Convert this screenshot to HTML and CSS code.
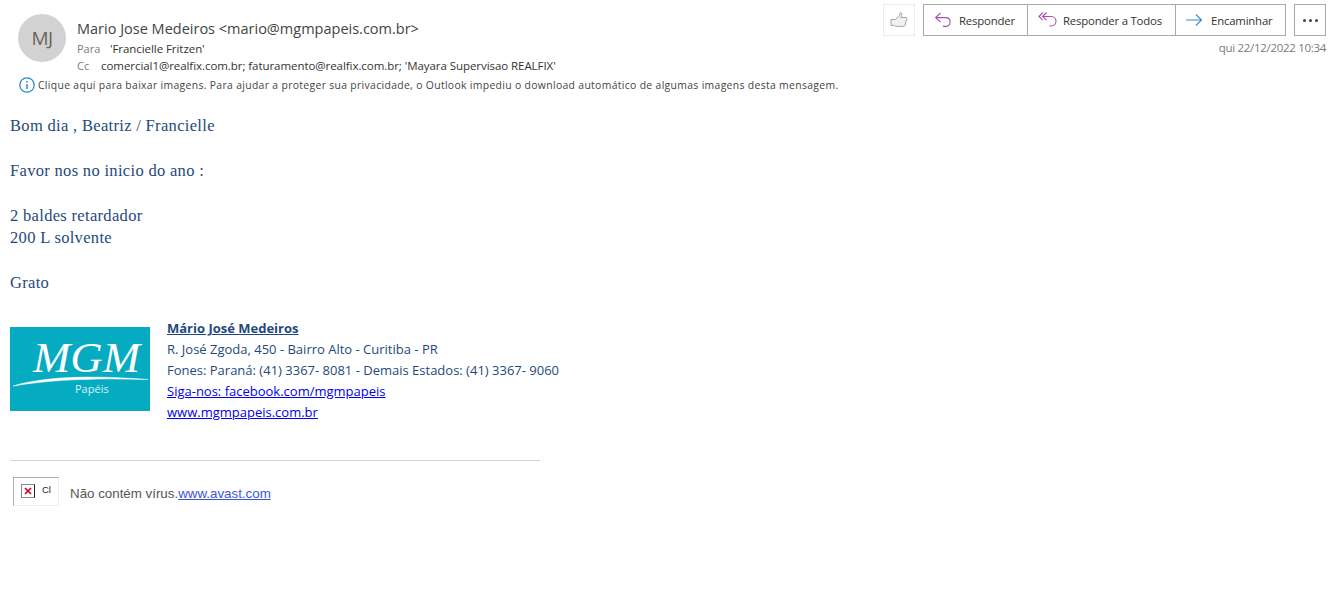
FILE: index.html
```html
<!DOCTYPE html>
<html lang="pt">
<head>
<meta charset="utf-8">
<title>Mensagem</title>
<link rel="stylesheet" href="styles.css">
</head>
<body>
<header class="head">
  <div class="avatar">MJ</div>
  <div class="meta">
    <div class="sender">Mario Jose Medeiros &lt;mario@mgmpapeis.com.br&gt;</div>
    <div class="rcpt"><span class="rlabel">Para</span><span>'Francielle Fritzen'</span></div>
    <div class="rcpt"><span class="rlabel rlabel-cc">Cc</span><span>comercial1@realfix.com.br; faturamento@realfix.com.br; 'Mayara Supervisao REALFIX'</span></div>
  </div>
  <div class="side">
    <div class="actions">
      <button class="like" aria-label="Curtir">
        <svg width="18" height="18" viewBox="0 0 18 18" fill="none" stroke="#a6a6a6" stroke-width="1" stroke-linejoin="round"><path d="M1 8.500h4.500l4-4.200L10.200 1.500c1.500 0 2 1.300 1.400 2.800L10.800 6.500h5.200c.9 0 1.200 1 .8 1.700l-1.900 6.300c-.2.600-.6.900-1.200.9H5.500l-1-1H1z" fill="#f0f0f0"/></svg>
      </button>
      <div class="group">
        <button class="btn btn-r">
          <svg width="18" height="18" viewBox="0 0 18 18" fill="none" stroke="#a94fb0" stroke-width="1.100"><path d="M6.500 2 1.600 6.600l4.900 4.400M1.800 6.600h10c2.800 0 4.300 2 4.300 4.300 0 2.500-1.700 4.300-4.300 4.500H9"/></svg>
          <span>Responder</span>
        </button>
        <button class="btn btn-ra">
          <svg width="20" height="18" viewBox="0 0 20 18" fill="none" stroke="#a94fb0" stroke-width="1.100"><path d="M4.800 1.500 1 5.500l3.800 3.700M8.500 1.500 4.500 5.500l4 3.700M4.800 5.500h8.500c2.800 0 4.700 2.100 4.700 4.800 0 2.700-2 4.700-4.700 4.700h-1.800"/></svg>
          <span>Responder a Todos</span>
        </button>
        <button class="btn btn-f">
          <svg width="18" height="18" viewBox="0 0 18 18" fill="none" stroke="#2f8fd0" stroke-width="1.100"><path d="M1 9h15.500M11 3.500 16.500 9 11 14.500"/></svg>
          <span>Encaminhar</span>
        </button>
      </div>
      <button class="more" aria-label="Mais"><i></i><i></i><i></i></button>
    </div>
    <div class="time">qui 22/12/2022 10:34</div>
  </div>
</header>
<div class="notice">
  <svg width="16" height="16" viewBox="0 0 16 16" fill="none"><circle cx="8" cy="8" r="7.200" stroke="#1a86c8" stroke-width="1.200"/><circle cx="8" cy="4.800" r=".9" fill="#1a86c8"/><path d="M8 7v5" stroke="#1a86c8" stroke-width="1.400"/></svg>
  <span>Clique aqui para baixar imagens. Para ajudar a proteger sua privacidade, o Outlook impediu o download automático de algumas imagens desta mensagem.</span>
</div>
<main class="body">
  <p class="text">Bom dia , Beatriz / Francielle</p>
  <p class="text"></p>
  <p class="text">Favor nos no inicio do ano :</p>
  <p class="text"></p>
  <p class="text">2 baldes retardador</p>
  <p class="text">200 L solvente</p>
  <p class="text"></p>
  <p class="text">Grato</p>
  <section class="sig">
    <svg class="logo" width="140" height="84" viewBox="0 0 140 84">
      <rect width="140" height="84" fill="#05abc0"/>
      <text x="23" y="45" class="logo-mark" textLength="107" lengthAdjust="spacingAndGlyphs">MGM</text>
      <path d="M3 59C40 48 90 49 138 52.500 90 51 44 52 3 59z" fill="#fff" stroke="#fff" stroke-width=".5"/>
      <text x="65" y="66" class="logo-sub">Papéis</text>
    </svg>
    <div class="sig-text">
      <div class="sig-name">Mário José Medeiros</div>
      <div>R. José Zgoda, 450 - Bairro Alto - Curitiba - PR</div>
      <div>Fones: Paraná: (41) 3367- 8081 - Demais Estados: (41) 3367- 9060</div>
      <div><a href="#">Siga-nos: facebook.com/mgmpapeis</a></div>
      <div><a href="#">www.mgmpapeis.com.br</a></div>
    </div>
  </section>
  <hr class="rule">
  <section class="virus">
    <div class="broken">
      <span class="broken-icon"><svg width="8" height="8" viewBox="0 0 8 8" stroke="#e0001a" stroke-width="1.700"><path d="M1 1l6 6M7 1 1 7"/></svg></span>
      <span class="broken-alt">Cl</span>
    </div>
    <div class="virus-text">Não contém vírus.<a href="#">www.avast.com</a></div>
  </section>
</main>
</body>
</html>
```
FILE: styles.css
```css
* { box-sizing: border-box; }
html, body { margin: 0; padding: 0; background: #fff; }
body { height: 610px; overflow: hidden; font-family: "Open Sans", "Noto Sans", sans-serif; color: #333; }

.head { display: flex; align-items: flex-start; height: 76px; padding: 4px 17px 0 18px; }
.avatar { width: 48px; height: 48px; margin-top: 10px; border-radius: 50%; background: #d2d2d2; color: #6b6459; display: flex; align-items: center; justify-content: center; font-size: 19px; letter-spacing: -.5px; flex: none; }
.meta { margin-left: 11px; flex: 1; }
.sender { margin-top: 14px; height: 22px; line-height: 22px; font-size: 14.500px; color: #444; }
.rcpt { display: flex; font-size: 11.500px; line-height: 17px; height: 17px; color: #333; letter-spacing: -.06px; }
.rlabel { color: #7a7a7a; width: 33px; flex: none; letter-spacing: 0; font-size: 11px; }
.rlabel-cc { width: 24px; }

.side { display: flex; flex-direction: column; align-items: flex-end; flex: none; }
.actions { display: flex; align-items: stretch; height: 32px; }
button { font: inherit; background: #fff; padding: 0; margin: 0; cursor: pointer; }
.like { width: 32px; border: 1px solid #ececec; display: flex; align-items: center; justify-content: center; margin-right: 8px; }
.group { display: flex; border: 1px solid #a9a9a9; width: 363px; }
.btn { display: flex; align-items: center; border: 0; border-left: 1px solid #a9a9a9; font-size: 11.400px; color: #333; letter-spacing: -.2px; }
.btn-r { width: 103px; border-left: 0; padding-left: 10px; gap: 7px; }
.btn-ra { width: 148px; padding-left: 10px; gap: 5px; }
.btn-f { flex: 1; padding-left: 9px; gap: 8px; }
.more { width: 32px; margin-left: 8px; border: 1px solid #a9a9a9; display: flex; align-items: center; justify-content: center; gap: 3px; }
.more i { width: 3px; height: 3px; border-radius: 50%; background: #444; }
.time { margin-top: 4px; font-size: 11.500px; line-height: 16px; color: #7a7a7a; letter-spacing: -.3px; }

.notice { display: flex; align-items: center; gap: 3px; height: 18px; padding-left: 19px; font-size: 10.400px; color: #444; letter-spacing: .33px; white-space: nowrap; }

.body { padding: 21px 0 0 10px; }
.text { margin: 0; height: 22.400px; line-height: 22.400px; font-family: "Liberation Serif", serif; font-size: 16.500px; color: #1f497d; letter-spacing: .32px; }

.sig { display: flex; align-items: flex-start; margin-top: 33px; }
.logo { flex: none; display: block; }
.logo-mark { font-family: "Liberation Serif", serif; font-style: italic; font-size: 42px; fill: #fff; }
.logo-sub { font-family: "Open Sans", sans-serif; font-size: 11px; fill: #d6f2f5; }
.sig-text { margin: -9px 0 0 17px; font-size: 13px; line-height: 21px; color: #1f497d; }
.sig-name { font-weight: 700; text-decoration: underline; }
.sig-text a { color: #0000ee; }

.rule { width: 530px; height: 1px; margin: 37px 0 0; border: 0; background: #d4d2e0; }
.virus { display: flex; align-items: center; margin-top: 16px; padding-left: 3px; }
.broken { width: 46px; height: 29px; display: flex; align-items: flex-start; padding: 6px 0 0 7px; border-left: 1px solid #b0b0b0; border-top: 1px solid #b0b0b0; border-right: 1px solid #eee; border-bottom: 1px solid #eee; }
.broken-icon { width: 14px; height: 14px; border: 1px solid #8a8a8a; border-right-color: #222; display: flex; align-items: center; justify-content: center; flex: none; }
.broken-alt { margin-left: 7px; font-family: "Liberation Sans", sans-serif; font-size: 9.500px; line-height: 11px; color: #222; }
.virus-text { margin: 4px 0 0 11px; font-family: "Liberation Sans", sans-serif; font-size: 13.330px; line-height: 16px; color: #555; }
.virus-text a { color: #3b55d6; }
```
